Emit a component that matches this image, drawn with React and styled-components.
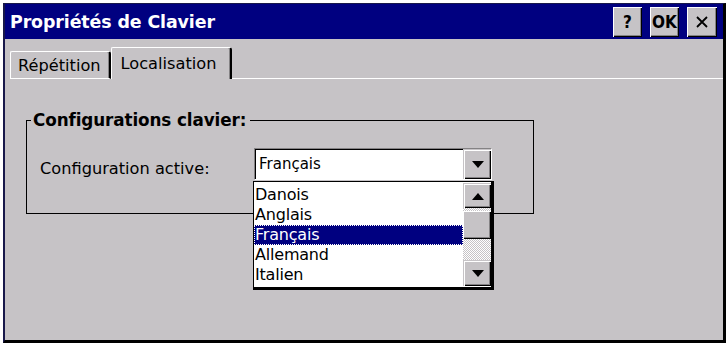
import React from 'react';
import styled, { createGlobalStyle } from 'styled-components';

const GlobalStyle = createGlobalStyle`
  html, body {
    margin: 0;
    padding: 0;
    background: #fff;
  }
  body {
    font-family: "DejaVu Sans", Tahoma, sans-serif;
    color: #000;
  }
`;

const gray = '#c6c3c6';

// fenêtre

const Screen = styled.div`
  width: 728px;
  height: 348px;
  padding: 3px 2px 5px 3px;
  box-sizing: border-box;
  background: #fff;
`;

const Window = styled.div`
  height: 100%;
  display: flex;
  flex-direction: column;
  background: ${gray};
  border-left: 2px solid #18184a;
  border-top: 1px solid #18184a;
  border-right: 3px solid #000;
  border-bottom: 3px solid #000;
  box-sizing: border-box;
`;

const TitleBar = styled.div`
  height: 35px;
  flex: none;
  display: flex;
  align-items: center;
  justify-content: space-between;
  background: #000080;
  padding: 0 6px 0 5px;
`;

const Title = styled.span`
  color: #fff;
  font-weight: bold;
  font-size: 17.4px;
  letter-spacing: -0.1px;
  padding-top: 1px;
`;

const TitleButtons = styled.div`
  display: flex;
  gap: 8px;
`;

const TitleButton = styled.button`
  width: ${(p) => p.$w || 29}px;
  height: 30px;
  padding: 0;
  display: flex;
  align-items: center;
  justify-content: center;
  background: ${gray};
  border: none;
  box-shadow: inset 1px 1px 0 #fff, inset -1px -1px 0 #000, inset -2px -2px 0 #848284;
  font-family: "DejaVu Sans Condensed", "DejaVu Sans", sans-serif;
  font-weight: bold;
  font-size: 17px;
  color: #000;
`;

// onglets

const TabRow = styled.div`
  display: flex;
  align-items: flex-end;
  padding: 8px 0 0 5px;
  flex: none;
`;

const Tab = styled.div`
  height: ${(p) => (p.$active ? 32 : 28)}px;
  padding: 0 ${(p) => (p.$active ? 14 : 8)}px 0 ${(p) => (p.$active ? 9 : 7)}px;
  display: flex;
  align-items: center;
  font-size: 16.2px;
  box-sizing: border-box;
  border-top: 1px solid #fff;
  border-left: 1px solid #fff;
  border-right: 2px solid #000;
  border-radius: 2px 3px 0 0;
  border-bottom: ${(p) => (p.$active ? 'none' : '1px solid #fff')};
  box-shadow: inset -1px 0 0 #848284;
  padding-top: ${(p) => (p.$active ? 0 : 1)}px;
`;

const TabFill = styled.div`
  flex: 1;
  border-bottom: 1px solid #fff;
`;

const Panel = styled.div`
  flex: 1;
  padding: 0 0 0 21px;
`;

// groupe

const GroupBox = styled.fieldset`
  width: 508px;
  height: 103px;
  box-sizing: border-box;
  margin: 32px 0 0 0;
  padding: 0;
  border: 1px solid #000;
`;

const Legend = styled.legend`
  margin-left: 4px;
  padding: 0 4px 0 2px;
  font-weight: bold;
  font-size: 16.8px;
  line-height: 18px;
  letter-spacing: -0.1px;
`;

const FieldRow = styled.div`
  display: flex;
  align-items: center;
  padding: 19px 0 0 13px;
`;

const Label = styled.span`
  width: 214px;
  font-size: 16.2px;
  padding-top: 8px;
`;

// liste déroulante

const Combo = styled.div`
  position: relative;
  width: 238px;
  height: 32px;
  box-sizing: border-box;
  display: flex;
  align-items: center;
  background: #fff;
  border-top: 1px solid #848284;
  border-left: 1px solid #848284;
  border-right: 1px solid #fff;
  border-bottom: 1px solid #fff;
  box-shadow: inset 1px 1px 0 #000;
`;

const ComboText = styled.span`
  flex: 1;
  padding-left: 4px;
  font-size: 15px;
`;

const ArrowButton = styled.div`
  width: 28px;
  height: ${(p) => p.$h || 29}px;
  flex: none;
  display: flex;
  align-items: center;
  justify-content: center;
  background: ${gray};
  box-sizing: border-box;
  border-top: 1px solid ${gray};
  border-left: 1px solid ${gray};
  box-shadow: inset 1px 1px 0 #fff, inset -1px -1px 0 #000, inset -2px -2px 0 #848284;
`;

const DropList = styled.div`
  position: absolute;
  top: 32px;
  left: -2px;
  width: 241px;
  height: 109px;
  box-sizing: border-box;
  display: flex;
  background: #fff;
  border: 1px solid #000;
  border-right-width: 3px;
  border-bottom-width: 3px;
  z-index: 2;
`;

const Items = styled.div`
  flex: 1;
  padding-top: 3px;
`;

const Item = styled.div`
  height: 20px;
  line-height: 20px;
  font-family: "DejaVu Sans", sans-serif;
  font-size: 16px;
  letter-spacing: -0.2px;
  padding-left: 1px;
  box-sizing: border-box;
  background: ${(p) => (p.$selected ? '#000080' : 'transparent')};
  color: ${(p) => (p.$selected ? '#fff' : '#000')};
  outline: ${(p) => (p.$selected ? '1px dotted #fff' : 'none')};
  outline-offset: -1px;
`;

const ScrollBar = styled.div`
  width: 28px;
  display: flex;
  flex-direction: column;
  padding: 1px 0 1px 0;
`;

const Track = styled.div`
  flex: ${(p) => (p.$grow ? 1 : 'none')};
  height: ${(p) => (p.$h ? `${p.$h}px` : 'auto')};
  background: repeating-conic-gradient(#fff 0 25%, ${gray} 0 50%) 0 0 / 2px 2px;
`;

const Thumb = styled.div`
  height: 28px;
  background: ${gray};
  box-shadow: inset 1px 1px 0 #fff, inset -1px -1px 0 #000, inset -2px -2px 0 #848284;
`;

const Triangle = ({ up }) => (
  <svg width="12" height="7" viewBox="0 0 12 7">
    <polygon points={up ? '6,0 12,7 0,7' : '0,0 12,0 6,7'} fill="#000" />
  </svg>
);

const langues = ['Danois', 'Anglais', 'Français', 'Allemand', 'Italien'];

const App = () => {
  return (
    <>
      <GlobalStyle />
      <Screen>
        <Window>
          <TitleBar>
            <Title>Propriétés de Clavier</Title>
            <TitleButtons>
              <TitleButton>?</TitleButton>
              <TitleButton>OK</TitleButton>
              <TitleButton $w={30}>
                <svg width="14" height="14" viewBox="0 0 14 14">
                  <path d="M2 2 L12 12 M12 2 L2 12" stroke="#000" strokeWidth="1.8" />
                </svg>
              </TitleButton>
            </TitleButtons>
          </TitleBar>

          <TabRow>
            <Tab>Répétition</Tab>
            <Tab $active>Localisation</Tab>
            <TabFill />
          </TabRow>

          <Panel>
            <GroupBox>
              <Legend>Configurations clavier:</Legend>
              <FieldRow>
                <Label>Configuration active:</Label>
                <Combo>
                  <ComboText>Français</ComboText>
                  <ArrowButton $h={30}>
                    <Triangle />
                  </ArrowButton>
                  <DropList>
                    <Items>
                      {langues.map((l) => (
                        <Item key={l} $selected={l === 'Français'}>
                          {l}
                        </Item>
                      ))}
                    </Items>
                    <ScrollBar>
                      <ArrowButton $h={25}>
                        <Triangle up />
                      </ArrowButton>
                      <Track $h={3} />
                      <Thumb />
                      <Track $grow />
                      <ArrowButton $h={26}>
                        <Triangle />
                      </ArrowButton>
                    </ScrollBar>
                  </DropList>
                </Combo>
              </FieldRow>
            </GroupBox>
          </Panel>
        </Window>
      </Screen>
    </>
  );
};

export default App;
